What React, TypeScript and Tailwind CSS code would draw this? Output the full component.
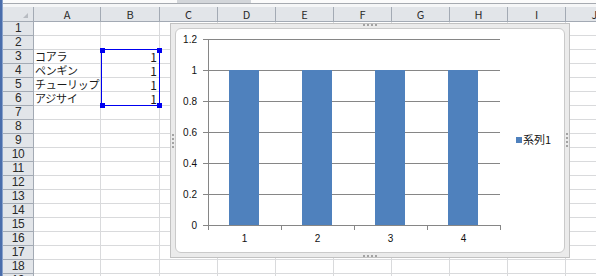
const COLS = [
  { l: "A", w: "w-[67px]" },
  { l: "B", w: "w-[59px]" },
  { l: "C", w: "w-[58px]" },
  { l: "D", w: "w-[58px]" },
  { l: "E", w: "w-[58px]" },
  { l: "F", w: "w-[58px]" },
  { l: "G", w: "w-[58px]" },
  { l: "H", w: "w-[58px]" },
  { l: "I", w: "w-[58px]" },
  { l: "J", w: "w-[58px]" },
];

const DATA: Record<number, string> = {
  3: "コアラ",
  4: "ペンギン",
  5: "チューリップ",
  6: "アジサイ",
};

const ROWS = Array.from({ length: 19 }, (_, i) => i + 1);

const GRID_Y = [10, 41, 72, 103, 134, 165, 196];
const Y_LABELS = ["1.2", "1", "0.8", "0.6", "0.4", "0.2", "0"];
const CAT_X = [32, 105, 178, 251, 324];

function Dots({ vertical = false }: { vertical?: boolean }) {
  return (
    <div className={vertical ? "flex flex-col gap-[2px]" : "flex gap-[2px]"}>
      {[0, 1, 2, 3].map((i) => (
        <span key={i} className="block w-[2px] h-[2px] bg-[#a3a3a3]" />
      ))}
    </div>
  );
}

function Chart() {
  return (
    <div className="absolute left-[170px] top-[23px] w-[400px] h-[235px] border border-[#c2c2c2] bg-[#ebebeb] p-[4px]">
      <div className="absolute left-[192px] top-0">
        <Dots />
      </div>
      <div className="absolute left-[192px] bottom-0">
        <Dots />
      </div>
      <div className="absolute left-[1px] top-[110px]">
        <Dots vertical />
      </div>
      <div className="absolute right-[1px] top-[109px]">
        <Dots vertical />
      </div>
      <div className="w-full h-full bg-white rounded-[6px] border border-[#cacaca]">
        <svg width="388" height="223" viewBox="0 0 388 223" className="block">
          {GRID_Y.map((y) => (
            <line key={y} x1={27} x2={324} y1={y + 0.5} y2={y + 0.5} stroke="#868686" strokeWidth={1} />
          ))}
          <line x1={32.5} x2={32.5} y1={10} y2={197} stroke="#868686" strokeWidth={1} />
          {CAT_X.map((x) => (
            <line key={x} x1={x + 0.5} x2={x + 0.5} y1={196} y2={201} stroke="#868686" strokeWidth={1} />
          ))}
          {[0, 1, 2, 3].map((i) => (
            <rect key={i} x={53 + i * 73} y={41} width={30} height={155} fill="#4f81bd" />
          ))}
          <g fontFamily="'Liberation Sans', Arial, sans-serif" fontSize="10" fill="#111">
            {GRID_Y.map((y, i) => (
              <text key={y} x={21} y={y + 4} textAnchor="end">
                {Y_LABELS[i]}
              </text>
            ))}
            {[1, 2, 3, 4].map((n, i) => (
              <text key={n} x={68.5 + i * 73} y={213} textAnchor="middle">
                {n}
              </text>
            ))}
          </g>
          <rect x={340} y={108} width={6} height={6} fill="#4f81bd" />
          <text x={347} y={115} fontFamily="'Noto Sans CJK JP', sans-serif" fontSize="11" fill="#111">
            系列1
          </text>
        </svg>
      </div>
    </div>
  );
}

export default function App() {
  return (
    <div className="relative flex w-[596px] h-[276px] overflow-hidden bg-white font-['Noto_Sans_CJK_JP',sans-serif] text-[#1a1a1a]">
      <div className="w-[3px] shrink-0 bg-[#4a6dab] border-r border-[#89a2cb]" />
      <div className="flex flex-col shrink-0">
        {/* strip above the headers */}
        <div className="flex shrink-0 h-[3px] bg-[#fbfbfb]">
          <div className="ml-[174px] w-[74px] bg-[#d3d6da]" />
        </div>
        <div className="shrink-0 h-px bg-[#a6aab0]" />
        <div className="shrink-0 h-[3px] bg-[#f5f6f7]" />

        {/* column headers */}
        <div className="flex shrink-0 h-[15px]">
          <div className="w-[31px] shrink-0 flex items-end justify-end pr-[5px] pb-[3px] bg-[#e2e5e9] border-r border-b border-[#a3aab4]">
            <svg width="5" height="5" viewBox="0 0 5 5">
              <polygon points="5,0 5,5 0,5" fill="#b8bcc2" />
            </svg>
          </div>
          {COLS.map((c) => (
            <div
              key={c.l}
              className={`${c.w} shrink-0 flex items-center justify-center text-[11px] leading-none text-[#2a2a2a] bg-[#e2e5e9] border-r border-b border-[#a3aab4]`}
            >
              {c.l}
            </div>
          ))}
        </div>

        {/* body rows */}
        {ROWS.map((r) => (
          <div key={r} className="flex shrink-0 h-[14px]">
            <div className="w-[31px] shrink-0 flex items-center justify-center font-['Liberation_Sans',sans-serif] text-[12px] leading-[13px] tracking-[-0.5px] text-[#2a2a2a] bg-[#e2e5e9] border-r border-b border-[#a3aab4]">
              {r}
            </div>
            {COLS.map((c, ci) => (
              <div
                key={c.l}
                className={`${c.w} shrink-0 flex items-end whitespace-nowrap leading-[13px] border-r border-b border-[#d9dadc] ${
                  ci === 1 ? "justify-end pr-[2px] text-[12px]" : "pl-px text-[11px] tracking-[-0.3px]"
                }`}
              >
                {ci === 0 && DATA[r]}
                {ci === 1 && DATA[r] ? "1" : null}
              </div>
            ))}
          </div>
        ))}
      </div>

      {/* data range highlight */}
      <div className="absolute left-[101px] top-[49px] w-[59px] h-[57px] border border-[#0000f0]" />
      <span className="absolute left-[100px] top-[48px] w-[5px] h-[5px] bg-[#0000f0]" />
      <span className="absolute left-[157px] top-[48px] w-[5px] h-[5px] bg-[#0000f0]" />
      <span className="absolute left-[100px] top-[103px] w-[5px] h-[5px] bg-[#0000f0]" />
      <span className="absolute left-[157px] top-[103px] w-[5px] h-[5px] bg-[#0000f0]" />

      <Chart />
    </div>
  );
}
